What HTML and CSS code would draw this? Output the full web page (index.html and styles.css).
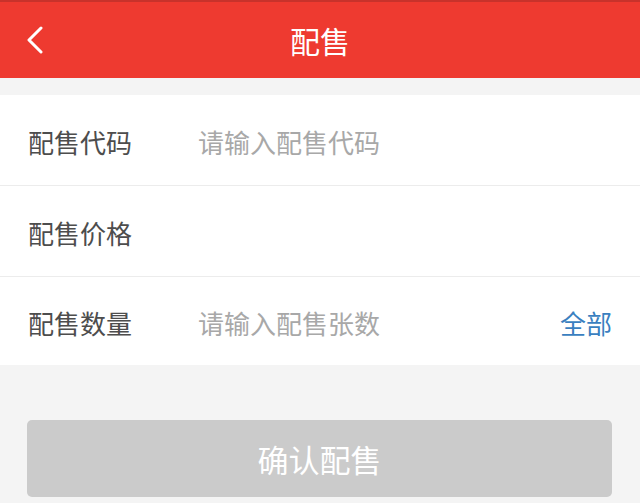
FILE: index.html
```html
<!DOCTYPE html>
<html lang="zh-CN">
<head>
  <meta charset="UTF-8">
  <meta name="viewport" content="width=device-width, initial-scale=1.0">
  <title>配售</title>
  <link rel="stylesheet" href="styles.css">
</head>
<body>
  <!-- 顶部导航 -->
  <div class="nav-bar">
    <a class="nav-back" href="#">
      <svg width="18" height="28" viewBox="0 0 18 28">
        <polyline points="15,2 3,14 15,26" fill="none" stroke="#fff" stroke-width="3" stroke-linecap="round" stroke-linejoin="round"/>
      </svg>
    </a>
    <h1>配售</h1>
  </div>

  <!-- 输入表单 -->
  <div class="form-group">
    <div class="form-row">
      <label for="code">配售代码</label>
      <input type="text" id="code" placeholder="请输入配售代码">
    </div>
    <div class="form-row">
      <label for="price">配售价格</label>
      <input type="text" id="price">
    </div>
    <div class="form-row">
      <label for="qty">配售数量</label>
      <input type="text" id="qty" placeholder="请输入配售张数">
      <a class="all-link" href="#">全部</a>
    </div>
  </div>

  <div class="actions">
    <button class="btn-submit" disabled>确认配售</button>
  </div>
</body>
</html>
```

FILE: styles.css
```css
body {
  margin: 0;
  background: #f4f4f4;
  font-family: "Noto Sans CJK SC", "Noto Sans", sans-serif;
}
.nav-bar {
  position: relative;
  height: 76px;
  border-top: 2px solid #c8322b;
  background: #ee3a30;
  display: flex;
  align-items: center;
  justify-content: center;
}
.nav-bar h1 {
  margin: 0;
  color: #fff;
  font-size: 30px;
  font-weight: normal;
}
/* 返回按钮 盖在导航栏左侧 */
.nav-back {
  position: absolute;
  left: 26px;
  top: 24px;
  display: block;
  line-height: 0;
}

.form-group {
  margin-top: 17px;
  background: #fff;
}
.form-row {
  display: flex;
  align-items: center;
  height: 91px;
  padding: 2px 28px 0;
  border-bottom: 1px solid #ececec;
  box-sizing: border-box;
}
.form-row:last-child {
  border-bottom: none;
  height: 88px;
}
.form-row label {
  width: 170px;
  flex: none;
  font-size: 26px;
  color: #4d4d4d;
}
.form-row input {
  flex: 1;
  min-width: 0;
  border: none;
  outline: none;
  padding: 0;
  font-family: inherit;
  font-size: 26px;
  color: #333;
  background: transparent;
}
.form-row input::placeholder {
  color: #a8a8a8;
}
.all-link {
  font-size: 26px;
  color: #3a7fc0;
  text-decoration: none;
}

.actions {
  padding: 55px 28px 0 27px;
}
.btn-submit {
  display: block;
  width: 100%;
  height: 77px;
  border: none;
  border-radius: 5px;
  background: #cbcbcb;
  color: #fff;
  font-family: inherit;
  font-size: 31px;
}
```
